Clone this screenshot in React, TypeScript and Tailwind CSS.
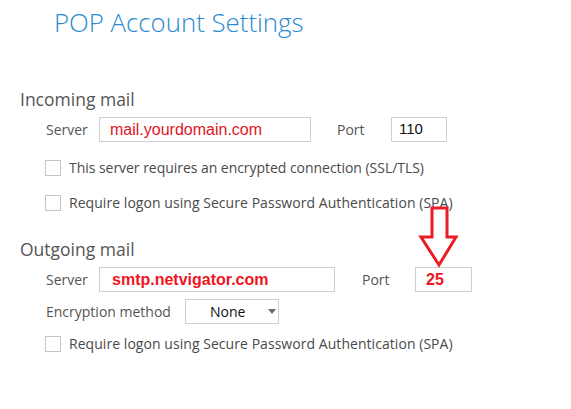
import React from "react";

const ui = { fontFamily: '"Open Sans", "Noto Sans", sans-serif' };
const arial = { fontFamily: '"Liberation Sans", Arial, sans-serif' };

function Check({ label, tight }: { label: string; tight?: boolean }) {
  return (
    <div className="flex items-center h-[16px] pl-[45px]">
      <div className="w-[16px] h-[16px] border border-[#c4c4c4] bg-white shrink-0" />
      <span
        className={
          "ml-[8px] text-[14px] leading-[16px] text-[#4a4a4a] whitespace-nowrap " +
          (tight ? "tracking-[-0.04px]" : "tracking-[0.05px]")
        }
        style={ui}
      >
        {label}
      </span>
    </div>
  );
}

export default function App() {
  return (
    <div className="relative w-[571px] h-[409px] bg-white overflow-hidden" style={ui}>
      <div className="flex flex-col">
        <div className="mt-[4px] h-[36px] pl-[54px] text-[25.8px] leading-[36px] font-light text-[#2a8ad2] whitespace-nowrap">
          POP Account Settings
        </div>

        <div className="mt-[47px] h-[24px] pl-[20px] text-[17.5px] leading-[24px] text-[#555]">Incoming mail</div>

        <div className="mt-[6px] h-[25px] flex items-center">
          <span className="pl-[46px] w-[99px] text-[14px] text-[#555]">Server</span>
          <div className="w-[212px] h-[25px] border border-[#cfcfcf] flex items-center pl-[10px]">
            <span className="text-[16px] text-[#e0141e]" style={arial}>mail.yourdomain.com</span>
          </div>
          <span className="ml-[26px] w-[54px] text-[14px] text-[#555]">Port</span>
          <div className="w-[56px] h-[25px] border border-[#cfcfcf] flex items-center pl-[7px]">
            <span className="text-[15px] text-[#111]" style={arial}>110</span>
          </div>
        </div>

        <div className="mt-[18px]">
          <Check label="This server requires an encrypted connection (SSL/TLS)" tight />
        </div>
        <div className="mt-[19px]">
          <Check label="Require logon using Secure Password Authentication (SPA)" />
        </div>

        <div className="mt-[26px] h-[24px] pl-[20px] text-[17.5px] leading-[24px] text-[#555]">Outgoing mail</div>

        <div className="mt-[6px] h-[25px] flex items-center">
          <span className="pl-[46px] w-[99px] text-[14px] text-[#555]">Server</span>
          <div className="w-[236px] h-[25px] border border-[#cfcfcf] flex items-center pl-[12px]">
            <span className="text-[16px] font-bold text-[#f0141e]" style={arial}>smtp.netvigator.com</span>
          </div>
          <span className="ml-[27px] w-[53px] text-[14px] text-[#555]">Port</span>
          <div className="w-[57px] h-[25px] border border-[#cfcfcf] flex items-center pl-[10px]">
            <span className="text-[16px] font-bold text-[#f0141e]" style={arial}>25</span>
          </div>
        </div>

        <div className="mt-[7px] h-[25px] flex items-center">
          <span className="pl-[46px] w-[185px] text-[14px] text-[#555] whitespace-nowrap">Encryption method</span>
          <div className="w-[94px] h-[25px] border border-[#cfcfcf] flex items-center">
            <span className="ml-[24px] text-[14px] text-[#111]">None</span>
            <svg className="ml-[23px]" width="8" height="5" viewBox="0 0 8 5">
              <path d="M0 0 L8 0 L4 5 Z" fill="#6b6b6b" />
            </svg>
          </div>
        </div>

        <div className="mt-[12px]">
          <Check label="Require logon using Secure Password Authentication (SPA)" />
        </div>
      </div>

      <svg className="absolute left-[415px] top-[203px]" width="46" height="66" viewBox="415 203 46 66">
        <polygon
          points="432,208 447,208 447,237 456,237 439,265 421,237 432,237"
          fill="white"
          stroke="#ea1c24"
          strokeWidth="3"
          strokeLinejoin="miter"
        />
      </svg>
    </div>
  );
}
